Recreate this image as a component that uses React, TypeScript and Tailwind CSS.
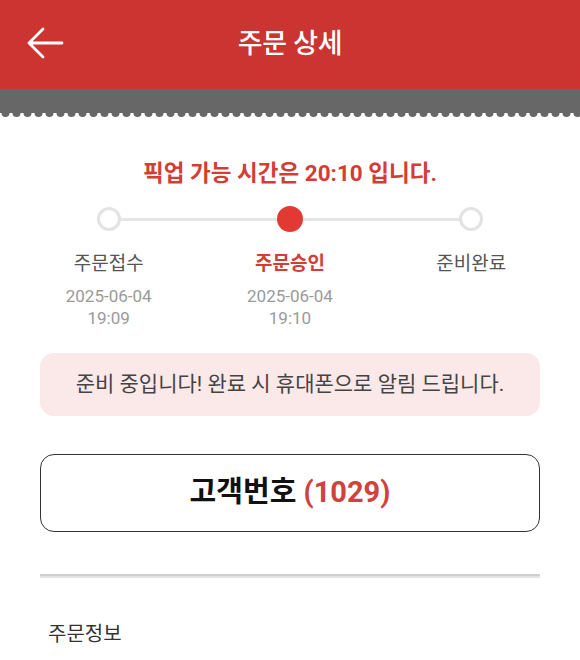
import React from 'react';

const FONT = { fontFamily: "Roboto, 'Noto Sans CJK KR', sans-serif" };

const steps = [
    { name: '주문접수', date: '2025-06-04', time: '19:09', state: 'done' },
    { name: '주문승인', date: '2025-06-04', time: '19:10', state: 'current' },
    { name: '준비완료', date: '', time: '', state: 'todo' },
];

const Scallop: React.FC = () => (
    <svg className="block w-full h-[30px]" preserveAspectRatio="none">
        <defs>
            <pattern id="bumps" x="0" y="0" width="11" height="30" patternUnits="userSpaceOnUse">
                <circle cx="5.5" cy="24" r="4" fill="#676767" />
            </pattern>
        </defs>
        <rect x="0" y="0" width="100%" height="24" fill="#676767" />
        <rect x="0" y="0" width="100%" height="30" fill="url(#bumps)" />
    </svg>
);

export default function App() {
    return (
        <div className="w-[580px] h-[660px] bg-white overflow-hidden" style={FONT}>
            <header className="relative h-[89px] bg-[#cc3431] flex items-center justify-center">
                <svg className="absolute left-[24px] top-[27px] w-[42px] h-[32px]" viewBox="0 0 42 32" fill="none">
                    <path d="M38 16H5M19 2L5 16L19 30" stroke="white" strokeWidth="2.8" strokeLinecap="round" strokeLinejoin="round" />
                </svg>
                <h1 className="text-white text-[27px] font-medium tracking-[-0.3px] -mt-[1px]">주문 상세</h1>
            </header>
            <Scallop />

            <p className="mt-[40px] text-center text-[22.5px] leading-[28px] font-bold text-[#d43c36]">
                픽업 가능 시간은 20:10 입니다.
            </p>

            <div className="relative mt-[17px] px-[18px]">
                <div className="absolute left-[110px] right-[107px] top-[14px] h-[3px] bg-[#e6e6e6]" />
                <div className="grid grid-cols-3">
                    {steps.map(s => (
                        <div key={s.name} className="flex flex-col items-center">
                            <div className="h-[30px] flex items-center justify-center">
                                {s.state === 'current' ? (
                                    <div className="relative w-[26px] h-[26px] rounded-full bg-[#e23a33]" />
                                ) : (
                                    <div className="relative w-[24px] h-[24px] rounded-full border-[3px] border-[#e3e3e3] bg-white" />
                                )}
                            </div>
                            <p className={`mt-[16px] text-[19px] leading-[28px] ${s.state === 'current' ? 'font-bold text-[#d43c36]' : 'text-[#555555]'}`}>
                                {s.name}
                            </p>
                            {s.date && (
                                <div className="mt-[7px] text-center text-[17px] leading-[22px] text-[#9a9a9a]">
                                    <div>{s.date}</div>
                                    <div>{s.time}</div>
                                </div>
                            )}
                        </div>
                    ))}
                </div>
            </div>

            <div className="mx-[40px] mt-[24px] h-[63px] rounded-[14px] bg-[#fbe8e8] flex items-center justify-center">
                <p className="text-[21px] text-[#444444]">준비 중입니다! 완료 시 휴대폰으로 알림 드립니다.</p>
            </div>

            <div className="mx-[40px] mt-[38px] h-[78px] rounded-[14px] border-[1.5px] border-[#333333] flex items-center justify-center">
                <p className="text-[29px] font-bold text-[#111111]">
                    고객번호 <span className="text-[#d0433b]">(1029)</span>
                </p>
            </div>

            <div className="mx-[40px] mt-[42px]">
                <div className="h-[2px] bg-[#cfcfcf]" />
                <div className="h-[2px] bg-[#e4e4e4]" />
            </div>

            <p className="mt-[42px] ml-[48px] text-[20px] leading-[28px] text-[#333333]">주문정보</p>
        </div>
    );
}
